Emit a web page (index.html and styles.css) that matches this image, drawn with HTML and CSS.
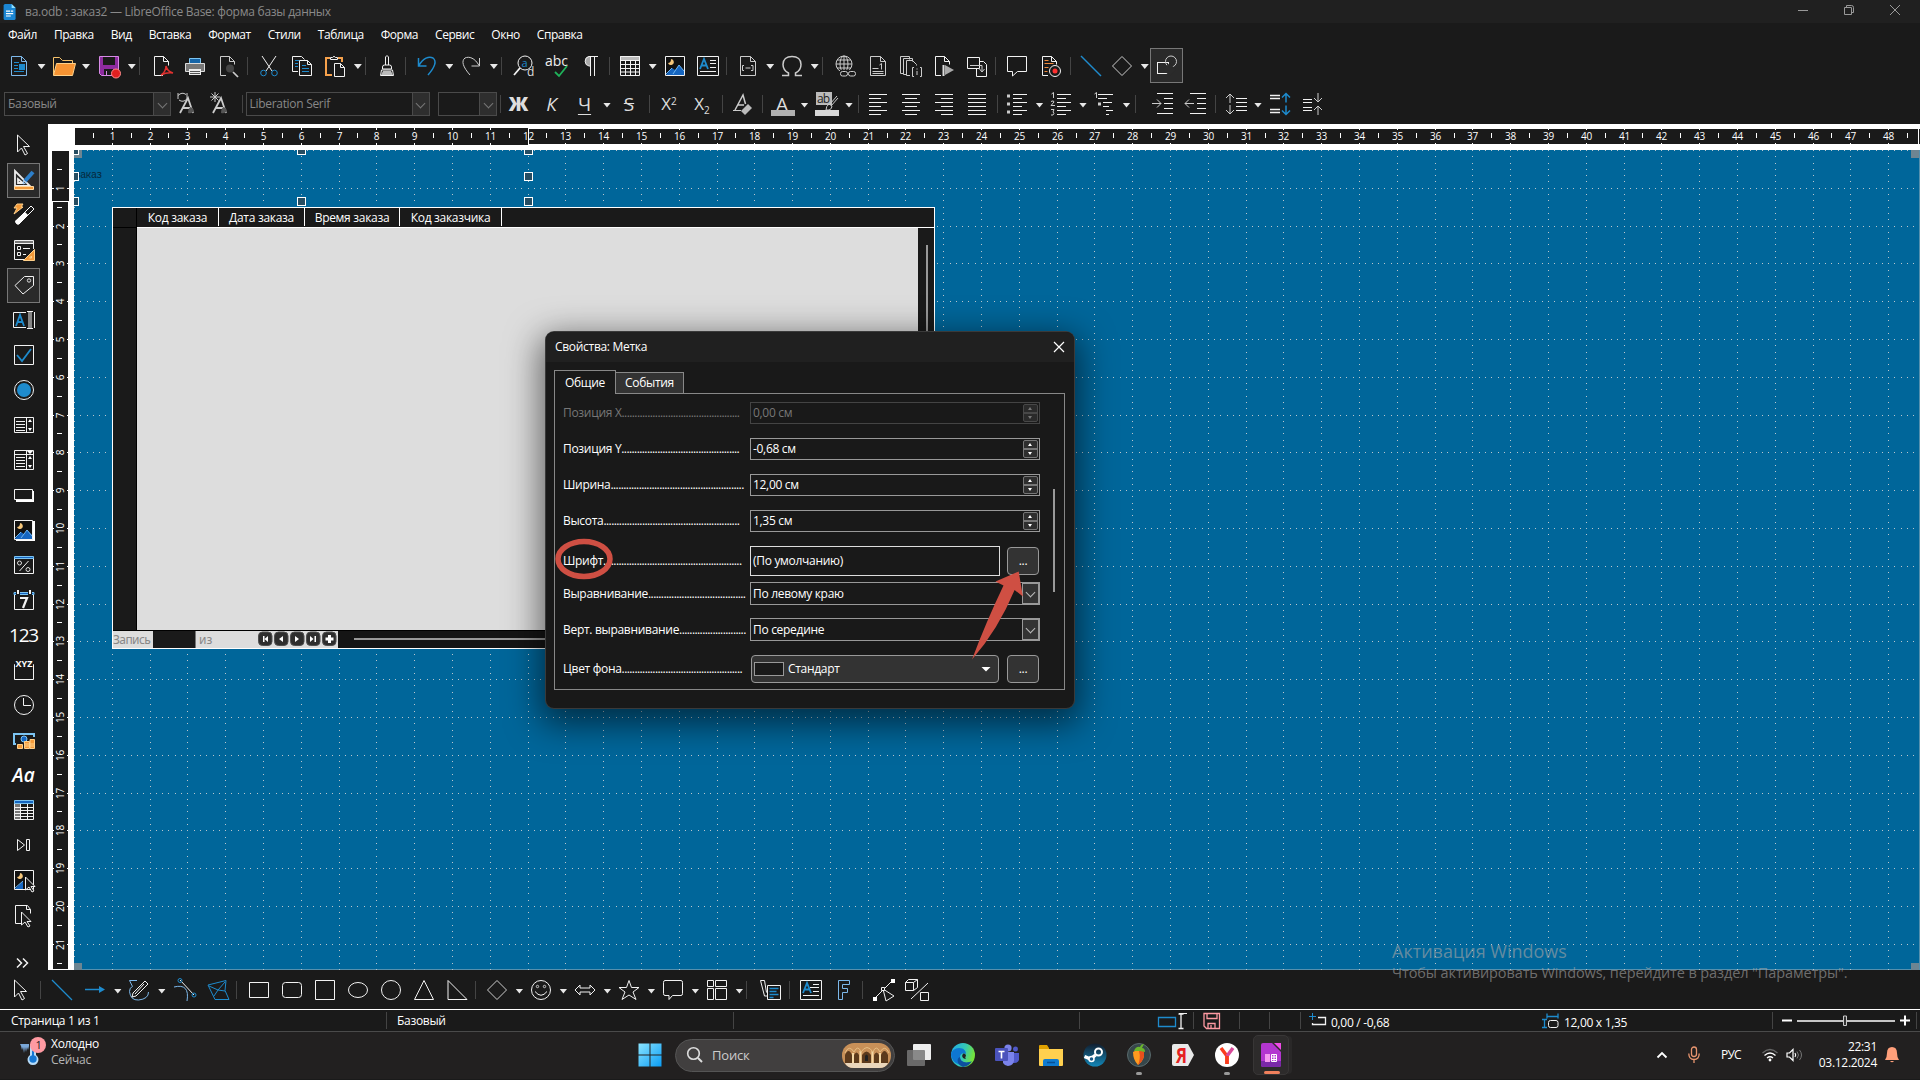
FILE: index.html
```html
<!DOCTYPE html>
<html lang="ru">
<head>
<meta charset="utf-8">
<title>ва.odb : заказ2 — LibreOffice Base: форма базы данных</title>
<link rel="stylesheet" href="styles.css">
</head>
<body>
<header class="titlebar">
  <svg class="appicon" viewBox="0 0 16 20"><path fill="#1b86d3" d="M2 0h8l5 5v13a2 2 0 0 1-2 2H2a2 2 0 0 1-2-2V2a2 2 0 0 1 2-2z"/><path fill="#8fe0ff" d="M10 0l5 5h-5z"/><path stroke="#fff" stroke-width="1.5" d="M3 9h5M3 12h9M3 15h6M9 9h3"/></svg>
  <span class="wtitle">ва.odb : заказ2 — LibreOffice Base: форма базы данных</span>
  <div class="wbtns">
    <svg viewBox="0 0 12 12"><path d="M1 6.5h10"/></svg>
    <svg viewBox="0 0 12 12"><path d="M1.5 3.5h7v7h-7zM3.5 3v-1.5h5q2 0 2 2v5h-1.500"/></svg>
    <svg viewBox="0 0 12 12"><path d="M1 1l10 10M11 1L1 11"/></svg>
  </div>
</header>
<nav class="menu"><span>Файл</span><span>Правка</span><span>Вид</span><span>Вставка</span><span>Формат</span><span>Стили</span><span>Таблица</span><span>Форма</span><span>Сервис</span><span>Окно</span><span>Справка</span></nav>

<div class="tb tb1">
  <i><svg viewBox="0 0 24 24"><path class="lb" d="M4.500 2.500h10l5 5v14h-15zM14.500 2.500v5h5"/><path class="b" d="M7 8.500h5M7 11.500h4M7 14.500h4M7 17.500h10"/><path fill="#1e8bcd" d="M12 10h6v6h-6z"/></svg></i><u></u>
  <i><svg viewBox="0 0 24 24"><path stroke="#f6c26b" d="M1.500 21v-17.500h6l3 3h10v4"/><path fill="#f79433" stroke="#ffd28a" d="M1.500 21.500l3-12h19l-3 12z"/></svg></i><u></u>
  <i class="m1"><svg viewBox="0 0 24 24"><path fill="#8e2ba0" stroke="#d78be6" d="M2.500 2.500h19v19h-17l-2-2z"/><path fill="#1a1a1a" d="M6 3h12v8H6zM7 15h9v6H7z"/><path stroke="#d78be6" d="M9.500 17v4"/><circle cx="19" cy="19.500" r="4.500" fill="#e02020" stroke="#ff8a8a"/></svg></i><u></u><b></b>
  <i class="m1"><svg viewBox="0 0 24 24"><path class="w" d="M13 21.500H4.500v-19h9l5 5v4M13.500 2.500v5h5"/><path stroke="#e0312f" stroke-width="1.500" d="M11 21c3-2 5-6 5-9 1 4 3 6 7 7-4-.5-8 0-12 2z"/></svg></i>
  <i><svg viewBox="0 0 24 24"><path stroke="#7cc4f2" fill="#1565a8" d="M6.500 9V4.500h11V9"/><path fill="#777" stroke="#ddd" d="M2.500 9.500h19v8h-19z"/><path fill="#eee" d="M6 15h12v6H6z"/><path d="M7 17.500h10M7 19.500h10" stroke="#555"/></svg></i>
  <i><svg viewBox="0 0 24 24"><path d="M10 21.500H4.500v-19h9l5 5v3M13.500 2.500v5h5"/><circle cx="14" cy="14.500" r="4" fill="#444"/><path stroke-width="1.700" d="M17 18l5 5"/></svg></i><b></b>
  <i class="m1"><svg viewBox="0 0 24 24"><path class="w" d="M5 2l10 15M19 2L9 17"/><circle class="b" cx="6.500" cy="19" r="2.800"/><circle class="b" cx="17.500" cy="19" r="2.800"/></svg></i>
  <i><svg viewBox="0 0 24 24"><path class="w" d="M8 17.500H2.500v-15h9l3 3"/><path class="w" fill="#1a1a1a" d="M9.500 6.500h8l4 4v11h-12zM17.500 6.500v4h4"/><path class="b" d="M5 6.500h4M5 9.500h3M5 12.500h3M12 11.500h4M12 14.500h7M12 17.500h7"/></svg></i>
  <i><svg viewBox="0 0 24 24"><path stroke="#f6a14b" stroke-width="2" d="M9 21H3V4h4M15 4h4v4"/><path class="w" d="M7.500 5.500v-2h2q1.500-2.500 3 0h2v2z"/><path class="w" fill="#1a1a1a" d="M11.500 9.500h6l4 4v9h-10zM17.500 9.500v4h4"/></svg></i><u></u><b></b>
  <i><svg viewBox="0 0 24 24"><path d="M10.500 11V3q1.500-3 3 0v8M7.500 15v-2q0-2 2-2h5q2 0 2 2v2zM6.500 16h11l1 5.500h-13z" class="w"/><path fill="#bbb" d="M8 17h8l2 4H6z"/></svg></i><b></b>
  <i><svg viewBox="0 0 24 24"><path class="b" stroke-width="1.500" d="M3.500 4v8h8M4 11.500C8 4 14 2 18 4c4 3 2 9-5 17"/></svg></i><u></u>
  <i><svg viewBox="0 0 24 24"><path d="M20.500 4v8h-8M20 11.500C16 4 10 2 6 4c-4 3-2 9 5 17"/></svg></i><u></u><b></b>
  <i class="m1"><svg viewBox="0 0 24 24"><circle class="w" cx="13" cy="9" r="7"/><path class="w" stroke-width="1.800" d="M8 14l-6 7"/><text x="9.500" y="13" font-size="11" fill="#1e8bcd">a</text><text x="15" y="22" font-size="12" fill="#ddd">d</text></svg></i>
  <i><svg viewBox="0 0 24 24"><text x="0" y="12" font-size="14" textLength="23" fill="#eee">abc</text><path stroke="#1fb25a" stroke-width="1.800" d="M10 18l4 4 8-10"/></svg></i>
  <i><svg viewBox="0 0 24 24"><path fill="#aaa" d="M12 2v10a5 5 0 0 1 0-10z"/><path class="w" d="M20 2.500h-9a4.500 4.800 0 0 0 0 9.500h1.500v10M12.500 3v19M16.500 3v19"/></svg></i><b></b>
  <i><svg viewBox="0 0 24 24"><path fill="#bbb" d="M2 2h20v4H2z"/><path class="w" d="M2.500 2.500h19v19h-19zM2.500 6.500h19M2.500 10.500h19M2.500 14.500h19M2.500 18h19M7.500 6v15.500M12.500 6v15.500M17.500 6v15.500"/></svg></i><u></u>
  <i><svg viewBox="0 0 24 24"><path class="w" fill="#111" d="M2.500 2.500h19v19h-19z"/><path fill="#1565c0" d="M3 21l6-7 3 2 4-5 5 6v4z"/><path stroke="#6db5f0" d="M3 20l6-6M10 20l6-9 5 6"/><path fill="#f5c67a" d="M8 5a3 3 0 1 1-3 4q3 0 3-4z"/></svg></i>
  <i><svg viewBox="0 0 24 24"><path class="w" d="M1.500 2.500h21v19h-21zM14 6.500h6M14 9.500h6M14 13.500h6M4 17.500h16"/><path class="b" stroke-width="1.800" d="M4 15l4-10 4 10M5.500 11.500h5"/></svg></i><b></b>
  <i><svg viewBox="0 0 24 24"><path d="M4.500 2.500h10l5 5v14h-15zM14.500 2.500v5h5M8 11.500H6.500v5H8M15 11.500h2v5h-2M9.500 14h5"/></svg></i><u></u>
  <i><svg viewBox="0 0 24 24"><path d="M2 21.500h6.500v-2.500C4.500 17 3 14 3 10.500 3 5.500 6.500 2.500 12 2.500s9 3 9 8c0 3.500-1.500 6.500-5.500 8.500v2.500H22" stroke-width="1.500"/></svg></i><u></u><b></b>
  <i class="m1"><svg viewBox="0 0 24 24"><circle cx="11" cy="10" r="8"/><ellipse cx="11" cy="10" rx="4" ry="8"/><path d="M3 10h16M4 6h14M4 14h14M11 2v14"/><rect x="7" y="16" width="16" height="7" fill="#1a1a1a" stroke="none"/><rect x="7.500" y="17.500" width="7" height="4.500" rx="2"/><rect x="15.500" y="17.500" width="7" height="4.500" rx="2"/></svg></i>
  <i><svg viewBox="0 0 24 24"><path d="M4.500 2.500h10l5 5v14h-15zM14.500 2.500v5h5M6.500 14.500h6M6.500 17.500h11M6.500 19.500h11M13.500 11l2-1.500v6"/></svg></i>
  <i><svg viewBox="0 0 24 24"><path d="M5 19.500H1.500v-17h9v3M8 20.500H4.500v-16h9v3M11 21.500H7.500v-15h6l4 4v1M15 13.500h-1.500v9H15M21 13.500h1.500v9H21M18 17v4M18 14.500v1"/></svg></i>
  <i><svg viewBox="0 0 24 24"><path class="w" d="M9 21.500H3.500v-19h9l5 5v3M12.500 2.500v5h5"/><path fill="#aaa" d="M13 11l9 5-9 5z"/><path stroke-width="2" stroke="#ddd" d="M11.500 11v11"/></svg></i>
  <i><svg viewBox="0 0 24 24"><path class="w" d="M2.500 3.500h12v11h-12zM14.500 7.500h4l3 3v12h-10v-8"/><path d="M5 11.500h12v6M14.500 15l2.500 3 2.500-3"/></svg></i><b></b>
  <i><svg viewBox="0 0 24 24"><path class="w" d="M2.500 2.500h19v15h-9l-5 4.500v-4.500h-5z"/></svg></i>
  <i class="m1"><svg viewBox="0 0 24 24"><path class="w" d="M9 21.500H3.500v-19h9l5 5v3M12.500 2.500v5h5"/><path stroke="#f08a3c" d="M5.500 6.500h4M5.500 9.500h9M5.500 13.500h4M5.500 17.500h3"/><circle class="w" cx="16" cy="17" r="5.500" fill="#1a1a1a"/><circle cx="16" cy="17" r="2.500" fill="#ff3030" stroke="none"/></svg></i><b></b>
  <i><svg viewBox="0 0 24 24"><path class="b" stroke-width="1.500" d="M2 2l20 20"/></svg></i>
  <i class="n2"><svg viewBox="0 0 24 24"><path d="M12 2.500l9.500 9.500-9.500 9.500L2.500 12z"/></svg></i><u></u>
  <i class="on"><svg viewBox="0 0 24 24"><rect class="w" x="2.500" y="8.500" width="11" height="11"/><circle cx="16" cy="7.500" r="5.500"/><path fill="#2b2b2b" d="M14.500 9l6.500 6.500-6.500 6.500L8 15.500z"/></svg></i>
</div>

<div class="tb tb2">
  <span class="cb cb1 lc"><em>Базовый</em><s></s></span>
  <i class="x1"><svg viewBox="0 0 24 24"><path d="M3 21l8-15 5 15M6 16h7" stroke-width="1.800"/><path d="M1 7V1M1 3.500q4-4 8-1M10 1v6q-4 4-8 1"/><path fill="#555" d="M21 6l-7 9M23 8l-7 9M14 15q-3 1-3 6 5 1 6-3z"/></svg></i>
  <i><svg viewBox="0 0 24 24"><path d="M3 21l8-15 5 15M6 16h7" stroke-width="1.800"/><path d="M5 0v10M0 5h10M1.500 1.500l7 7M8.500 1.500l-7 7"/><path fill="#555" d="M21 6l-7 9M23 8l-7 9M14 15q-3 1-3 6 5 1 6-3z"/></svg></i><b></b>
  <span class="cb cb2"><em>Liberation Serif</em><s></s></span>
  <span class="cb cb3"><em></em><s></s></span><b></b>
  <i class="x2 tx bold">Ж</i><i class="tx ital">К</i><i class="tx und">Ч</i><u></u><i class="tx strike">S</i><b></b>
  <i class="tx sm">X<sup>2</sup></i><i class="tx sm">X<sub>2</sub></i><b></b>
  <i><svg viewBox="0 0 24 24"><path d="M5 18l8-15 2.500 9M8 13h6" stroke-width="1.500"/><path d="M3 18.500h8"/><path fill="#bbb" d="M18 12l4 4-7 7-4-4z"/></svg></i><b></b>
  <i class="tx">A<q></q></i><u></u>
  <i><svg viewBox="0 0 24 24"><path fill="#bbb" d="M1 0h16v13H1z"/><text x="2" y="11" font-size="12" textLength="13" fill="#222">ab</text><path d="M22 4l-7 8M23 6l-7 8M14 12q-3 2-3 6h3q3-1 3-4z"/><path fill="#d8d8d8" d="M0 18h24v6H0z"/></svg></i><u></u><b></b>
  <i><svg viewBox="0 0 24 24"><path class="w" d="M3 2.500h18M3 6.500h12M3 10.500h18M3 14.500h12M3 18.500h18M3 22.500h12"/></svg></i>
  <i><svg viewBox="0 0 24 24"><path class="w" d="M3 2.500h18M6 6.500h12M3 10.500h18M6 14.500h12M3 18.500h18M6 22.500h12"/></svg></i>
  <i><svg viewBox="0 0 24 24"><path class="w" d="M3 2.500h18M9 6.500h12M3 10.500h18M9 14.500h12M3 18.500h18M9 22.500h12"/></svg></i>
  <i><svg viewBox="0 0 24 24"><path class="w" d="M3 2.500h18M3 6.500h18M3 10.500h18M3 14.500h18M3 18.500h18M3 22.500h18"/></svg></i><b></b>
  <i><svg viewBox="0 0 24 24"><path class="w" d="M8 2.500h14M8 6.500h9M8 10.500h14M8 14.500h9M8 18.500h14M8 22.500h9"/><path stroke-width="3" d="M2 4h3M2 12h3M2 20h3"/></svg></i><u></u>
  <i class="n1"><svg viewBox="0 0 24 24"><path class="w" d="M8 2.500h14M8 6.500h9M8 10.500h14M8 14.500h9M8 18.500h14M8 22.500h9"/><path d="M2.500 2l2-1.500V6M2 9.500q3-1.500 3 .5l-3 3.500h4M2 17.500h3l-1 2.500q2 1 0 3H2"/></svg></i><u></u>
  <i class="n1"><svg viewBox="0 0 24 24"><path class="w" d="M6 2.500h15M6 6.500h9M11 10.500h9M11 14.500h6M14 18.500h7M14 22.500h3"/><path d="M2.500 2l2-1.500V6"/><path stroke-width="3" d="M6 12h3"/></svg></i><u></u><b></b>
  <i class="x3"><svg viewBox="0 0 24 24"><path class="w" d="M6 1.500h16M13 6.500h9M13 11.500h9M13 16.500h9M6 21.500h16"/><path d="M1 11.500h9M6 7.500l4 4-4 4"/></svg></i>
  <i><svg viewBox="0 0 24 24"><path class="w" d="M6 1.500h16M13 6.500h9M13 11.500h9M13 16.500h9M6 21.500h16"/><path d="M1 11.500h9M5 7.500l-4 4 4 4"/></svg></i><b></b>
  <i><svg viewBox="0 0 24 24"><path class="w" d="M12 6.500h11M12 10.500h11M12 14.500h11M12 18.500h11"/><path d="M6 2v9M2 6l4-4 4 4M6 13v9M2 18l4 4 4-4"/></svg></i><u></u>
  <i class="x4"><svg viewBox="0 0 24 24"><path class="w" stroke-width="1.500" d="M2 3.500h10M2 6.500h10M2 17.500h10M2 20.500h10"/><path class="b" d="M18 1.500v9M14 5.500l4-4 4 4M18 13.500v9M14 18.500l4 4 4-4" stroke-width="1.500"/></svg></i>
  <i><svg viewBox="0 0 24 24"><path class="w" d="M2 7.500h9M2 10.500h9M2 15.500h9M2 18.500h9"/><path d="M17 1v9M13 6l4 4 4-4M17 23v-9M13 18l4-4 4 4"/></svg></i>
</div>

<main class="work">
  <aside class="side">
    <i><svg viewBox="0 0 24 24"><path class="w" d="M5.500 2l12 11.500h-6l4 7-2.500 1.500-3.500-7-4 4z"/></svg></i>
    <i class="on"><svg viewBox="0 0 24 24"><path stroke="#eee" stroke-width="1.800" d="M3 3v15h15zM6 11v4h5z"/><path stroke="#2d7fc9" stroke-width="4" d="M21 4l-8 9"/><path stroke="#9cc9f5" d="M12 12l-1 4 4-2"/><path fill="#f39a3a" stroke="#ffd9a0" d="M2.500 18.500h19v3h-19z"/></svg></i>
    <i><svg viewBox="0 0 24 24"><path stroke="#fff" d="M19 3l3 3L7 21q-3 1-3-3z"/><path fill="#fff" d="M13 9l3 3-9 9q-3 1-4-3z"/><path fill="#f39a3a" stroke="#ffd08a" d="M5 1h6L9 4h2L2 11l3-6H2z"/></svg></i>
    <i><svg viewBox="0 0 24 24"><path class="w" d="M12 21.500H2.500v-19h19V11M2.500 5.500h19M5.500 8.500h3v3h-3zM5.500 14.500h3v3h-3zM11 10.500h7M11 16.500h3"/><path fill="#777" d="M3 3h18v2H3z"/><path fill="#f39a3a" stroke="#ffd08a" d="M22.500 11.500v11h-11zM19.500 18v2h-2z"/></svg></i>
    <i class="on"><svg viewBox="0 0 24 24"><path class="w" d="M12.500 3.500h9v9l-10.500 8.500-8-8.500z"/><circle cx="17" cy="7.500" r="1.700"/></svg></i>
    <i><svg viewBox="0 0 24 24"><path class="w" d="M14 4.500H1.500v15H14M22.500 4v16M15 3.500h6M15 20.500h6M17 3.500v17h2v-17"/><path class="b" stroke-width="1.800" d="M4 18l4-11 4 11M5.500 14h5"/></svg></i>
    <i><svg viewBox="0 0 24 24"><path class="w" d="M2.500 2.500h19v19h-19z"/><path class="b" stroke-width="1.800" d="M5 12l5 6 9-12"/></svg></i>
    <i><svg viewBox="0 0 24 24"><circle class="w" cx="12" cy="12" r="9.500"/><circle cx="12" cy="12" r="7" fill="#1e8bcd" stroke="none"/></svg></i>
    <i><svg viewBox="0 0 24 24"><path class="w" d="M2.500 4.500h19v15h-19zM14.500 4.500v15M4 8.500h9M4 11.500h9M4 14.500h9M4 17.500h9"/><path fill="#fff" d="M18 6l2 3h-4zM18 18l2-3h-4z"/></svg></i>
    <i><svg viewBox="0 0 24 24"><path class="w" d="M2.500 2.500h19v19h-19zM14.500 2.500v19M2.500 6.500h19M4 9.500h9M4 12.500h9M4 15.500h9M4 18.500h9"/><path fill="#fff" d="M18 8l2 3h-4zM18 20l2-3h-4zM15 3h6l-3 3z"/></svg></i>
    <i><svg viewBox="0 0 24 24"><path fill="#fff" d="M4 8h18v11H4z"/><path fill="#1a1a1a" class="w" d="M2.500 6.500h18v10h-18z"/></svg></i>
    <i><svg viewBox="0 0 24 24"><path fill="#fff" d="M4 3h19v20H4z"/><path class="w" fill="#111" d="M2.500 2.500h18v19h-18z"/><path fill="#1565c0" d="M3 21l6-7 3 2 3-4 5 5v4z"/><path stroke="#6db5f0" d="M3 20l6-6M9 20l6-8 5 6"/><path fill="#f5c67a" d="M8 5a3 3 0 1 1-3 4q3 0 3-4z"/></svg></i>
    <i><svg viewBox="0 0 24 24"><path class="w" d="M2.500 4v16.500h19V4M16.500 8l-9 10"/><circle cx="7.500" cy="10" r="2"/><circle cx="16" cy="16.500" r="2"/><path fill="#1565c0" stroke="#7cc4f2" d="M2.500 3.500h19v2h-19z"/></svg></i>
    <i><svg viewBox="0 0 24 24"><path class="w" d="M2.500 6v15.500h19V6"/><path fill="#1565c0" stroke="#7cc4f2" d="M2 4.500h20v2H2z"/><path stroke="#1a1a1a" stroke-width="4" d="M6 2v5M18 2v5"/><path class="w" stroke-width="2" d="M6 2v4M18 2v4"/><path class="w" stroke-width="2.200" d="M8 10h7l-4 10"/></svg></i>
    <i class="num">123</i>
    <i><svg viewBox="0 0 24 24"><path class="w" d="M3 6.500h-.500v15h19v-15h-.500"/><text x="3.500" y="9" font-size="9" font-weight="700" textLength="17" fill="#fff">XYZ</text></svg></i>
    <i><svg viewBox="0 0 24 24"><circle class="w" cx="12" cy="12" r="9.500"/><path class="w" d="M11.500 5v7.500H19"/></svg></i>
    <i><svg viewBox="0 0 24 24"><path stroke="#7cc4f2" stroke-width="2" d="M4 16H2V6h20v3"/><circle cx="12" cy="11" r="3" fill="#1565c0" stroke="#7cc4f2"/><path fill="#f39a3a" stroke="#ffd08a" d="M5.500 16.500h5v4h-5zM12.500 13.500h5v7h-5zM18 11.500h4.500v9H18zM12.500 16h10M12.500 18h10"/></svg></i>
    <i class="num aa">Aa</i>
    <i><svg viewBox="0 0 24 24"><path fill="#777" d="M3 6h5v15H3z"/><path class="w" d="M2.500 3v18.500h19V3M2.500 9.500h19M2.500 12.500h19M2.500 15.500h19M2.500 18.500h19M8.500 6v15M15.500 6v15"/><path fill="#1565c0" stroke="#7cc4f2" d="M2.500 2.500h19v3h-19z"/></svg></i>
    <i><svg viewBox="0 0 24 24"><path class="w" d="M5.500 6.500v11l7-5.500zM14.500 6.500h3v11h-3z"/></svg></i>
    <i><svg viewBox="0 0 24 24"><path class="w" fill="#111" d="M2.500 2.500h19v19h-19z"/><path fill="#1565c0" d="M3 21l8-8v8z"/><path stroke="#6db5f0" d="M3 20l8-7"/><path fill="#f5c67a" d="M8 5a3 3 0 1 1-3 4q3 0 3-4z"/><path class="w" fill="#1a1a1a" d="M13.500 9l9.500 9.500h-4l3 4.500-2 1-3-5-3.500 3z"/></svg></i>
    <i><svg viewBox="0 0 24 24"><path class="w" d="M9 20.500H3.500v-18h12l3 4v4M14.500 2.500v4h4"/><path class="w" fill="#1a1a1a" d="M9.500 9l9.500 9.500h-4l3 4.500-2 1-3-5-3.500 3z"/></svg></i>
    <i class="more"><svg viewBox="0 0 24 24"><path class="w" stroke-width="1.500" d="M5 7.500l4.500 4.500L5 16.500M11 7.500l4.500 4.500-4.500 4.500"/></svg></i>
  </aside>

  <section class="doc">
    <svg id="hr" class="hruler" width="1872" height="26"></svg>
    <svg id="vr" class="vruler" width="26" height="820"></svg>
    <div class="canvas">
      <svg id="grid" class="grid" width="1846" height="820"></svg>
      <span class="lbl">заказ</span>
      <div class="table">
        <div class="thead"><span class="rowh"></span><span class="c1">Код заказа</span><span class="c2">Дата заказа</span><span class="c3">Время заказа</span><span class="c4">Код заказчика</span></div>
        <div class="tbody"><div class="rows"></div><div class="cells"></div><div class="vs"><p></p></div></div>
        <div class="nav"><span class="rec">Запись</span><span class="box"></span><span class="of">из</span>
          <svg viewBox="0 0 80 16"><g fill="#2e2e2e" stroke="#505050"><rect x=".5" y="1" width="13.500" height="13.500" rx="4"/><rect x="16.500" y="1" width="13.500" height="13.500" rx="4"/><rect x="32.500" y="1" width="13.500" height="13.500" rx="4"/><rect x="48.500" y="1" width="13.500" height="13.500" rx="4"/><rect x="64.500" y="1" width="13.500" height="13.500" rx="4"/></g><path fill="#fff" d="M5 5h1.500v6H5zM10 5v6L6.500 8zM25 5v6l-4-3zM37 5v6l4-3zM52 5v6l3.500-3zM56.500 5H58v6h-1.500zM70 4h3v2.500h2.500v3H73V12h-3V9.500h-2.500v-3H70z"/></svg>
          <div class="hs"><p></p></div></div>
      </div>
      <svg id="handles" class="grid" width="1846" height="820"></svg>
    </div>
  </section>
</main>

<div class="tb tb3">
  <i><svg viewBox="0 0 24 24"><path class="w" d="M5.500 2l12 11.500h-6l4 7-2.500 1.500-3.500-7-4 4z"/></svg></i><b></b>
  <i class="m1"><svg viewBox="0 0 24 24"><path class="b" stroke-width="1.300" d="M2 2l20 20"/></svg></i>
  <i><svg viewBox="0 0 24 24"><path class="b" stroke-width="1.500" d="M2 11.500h16"/><path fill="#1e8bcd" d="M16 8l6 3.500-6 3.500z"/></svg></i><u></u>
  <i><svg viewBox="0 0 24 24"><path class="lb" d="M10 2.500H2.500l3 6q-3 1-3 5 1 9 9 8.500 10-1 10-8"/><path class="w" d="M18 3l3 3L9 18l-4 1 1-4zM17 6L8 16"/></svg></i><u></u>
  <i class="m1"><svg viewBox="0 0 24 24"><path class="lb" d="M1 9q16-4 13 14" /><path class="w" d="M7 2l14 15"/><circle class="b" cx="7" cy="2.500" r="2"/><circle class="b" cx="21" cy="17" r="2"/></svg></i>
  <i><svg viewBox="0 0 24 24"><path class="b" d="M2 7l18-4.500-1 10 4 9H9zM3 8l9 4 7-8M12 12l-4 6M12 12l7 1"/></svg></i><b></b>
  <i class="m1"><svg viewBox="0 0 24 24"><path class="w" d="M2.500 4.500h19v15h-19z"/></svg></i>
  <i><svg viewBox="0 0 24 24"><rect class="w" x="2.500" y="4.500" width="19" height="15" rx="3"/></svg></i>
  <i><svg viewBox="0 0 24 24"><path class="w" d="M2.500 2.500h19v19h-19z"/></svg></i>
  <i><svg viewBox="0 0 24 24"><ellipse class="w" cx="12" cy="12" rx="9.500" ry="7.500"/></svg></i>
  <i><svg viewBox="0 0 24 24"><circle class="w" cx="12" cy="12" r="9.500"/></svg></i>
  <i><svg viewBox="0 0 24 24"><path class="w" d="M12 2.500l9.500 19h-19z"/></svg></i>
  <i><svg viewBox="0 0 24 24"><path class="w" d="M3 2.500v19h19z"/></svg></i><b></b>
  <i><svg viewBox="0 0 24 24"><path d="M12 2.500l9.500 9.500-9.500 9.500L2.500 12z"/></svg></i><u></u>
  <i><svg viewBox="0 0 24 24"><circle class="w" cx="12" cy="12" r="9.500"/><circle cx="8.500" cy="8.500" r="1.200"/><circle cx="15.500" cy="8.500" r="1.200"/><path class="w" d="M6 13.500q6 7.500 12 0"/></svg></i><u></u>
  <i><svg viewBox="0 0 24 24"><path class="w" d="M2 12l5-5v3h10V7l5 5-5 5v-3H7v3z"/></svg></i><u></u>
  <i><svg viewBox="0 0 24 24"><path class="w" d="M12 2.500l2.500 7h7.500l-6 4.500 3 7.500-7-4.500-7 4.500 3-7.500-6-4.500h7.500z"/></svg></i><u></u>
  <i><svg viewBox="0 0 24 24"><path class="w" d="M4 2.500h16q1.500 0 1.500 2v11q0 2-1.500 2h-8.500L8 21.500v-4H4q-1.500 0-1.500-2v-11q0-2 1.500-2z"/></svg></i><u></u>
  <i><svg viewBox="0 0 24 24"><path class="w" d="M2.500 2.500h6v6h-6zM10.500 2.500h11v6h-11zM2.500 10.500h6v11h-6zM10.500 10.500h11v11h-11z"/></svg></i><u></u><b></b>
  <i class="x5"><svg viewBox="0 0 24 24"><path class="w" d="M1.500 2.500h4l2 12M1.500 2.500l4 15.500h3M8.500 7.500h13v14h-13z"/><path class="b" stroke-width="1.500" d="M10.500 10.500h9M10.500 13.500h7M10.500 16.500h9M10.500 19.500h4"/></svg></i><b></b>
  <i><svg viewBox="0 0 24 24"><path class="w" d="M1.500 2.500h21v19h-21zM14 6.500h6M11 9.500h9M14 13.500h6M4 17.500h16"/><path class="b" stroke-width="1.800" d="M4 15l4-10 4 10M5.500 11.500h5"/></svg></i>
  <i><svg viewBox="0 0 24 24"><path class="lb" d="M6.500 2.500h11v4h-7v4h5v4h-5v7h-4z"/></svg></i><b></b>
  <i><svg viewBox="0 0 24 24"><path class="w" d="M2 21L21 2M11 11l3 12 8-5z"/><path fill="#fff" d="M1 19h4v4H1zM19 1h4v4h-4z"/><path class="w" fill="#1a1a1a" d="M9.500 9.500h3v3h-3z"/></svg></i>
  <i><svg viewBox="0 0 24 24"><path class="w" d="M.5 4.500h8v8h-8zM.5 4.500l3-3h9l-4 3M12.500 1.500v8l-4 3M15.500 14.500h8v8h-8zM23 5L6 21"/></svg></i>
</div>

<footer class="status">
  <span class="s1">Страница 1 из 1</span><span class="s2">Базовый</span><span class="s3"></span>
  <span class="s4"><svg width="26" height="20" viewBox="0 0 26 20"><path class="b" stroke-width="1.300" d="M.5 6.500h17v9H.5z"/><path class="w" d="M21 2.500h8M25.500"/><path class="w" stroke-width="1.300" d="M20.500 3h5M20.500 17.500h5M23 3v14.500"/></svg></span>
  <span class="s5"><svg width="18" height="20" viewBox="0 0 18 20"><path stroke="#ff9aa2" stroke-width="1.300" d="M1 2.500h15.500v15h-13L1 15zM4 2.500v5h10v-5M5 17.500v-5h7v5M8 14v3"/></svg></span>
  <span class="s6"></span>
  <span class="s7"><svg width="18" height="16" viewBox="0 0 18 16"><path class="b" d="M3.500 0v7M0 3.500h7"/><path class="w" stroke-width="1.300" d="M3.500 10v1.500h13v-7H9"/></svg><em>0,00 / -0,68</em></span>
  <span class="s8"><svg width="18" height="16" viewBox="0 0 18 16"><path class="b" stroke-width="1.300" d="M5 3.500h11M5 .500v5M16 .500v5M2.500 6.500v8M0 6.500h5M0 14.500h5"/><rect class="w" x="6.500" y="7.500" width="9.500" height="7" rx="2"/></svg><em>12,00 x 1,35</em></span>
  <span class="s9"><svg width="130" height="16" viewBox="0 0 130 16"><path stroke="#fff" stroke-width="2" d="M0 7.500h10M118 7.500h10M123 2.500v10"/><path stroke="#fff" stroke-width="1.500" d="M15 8h98"/><path fill="#333" stroke="#ccc" d="M61.500 3h3v9.500h-3z"/></svg></span>
  <span class="s10">100 %</span>
</footer>

<div class="taskbar">
  <div class="weather">
    <svg width="36" height="32" viewBox="0 0 36 32"><path fill="#7aa7d8" d="M3 8h9v2l-1 4-1-3-1 5-1-5-1 6-1-6-1 3-1-4z"/><path fill="#b8dcf8" d="M13 8h6v11a5.500 5.500 0 1 1-6 0z"/><circle cx="16" cy="23" r="3.700" fill="#1577d3"/><path stroke="#1577d3" stroke-width="2" d="M16 12v9"/><circle cx="21" cy="9" r="8" fill="#ff9aa2"/><text x="18.500" y="13" font-size="11" fill="#222">1</text></svg>
    <div><span>Холодно</span><em>Сейчас</em></div>
  </div>
  <div class="apps">
    <svg width="24" height="24" viewBox="0 0 24 24"><defs><linearGradient id="wl" x1="0" y1="0" x2="1" y2="1"><stop offset="0" stop-color="#8be4ff"/><stop offset="1" stop-color="#0a9df5"/></linearGradient></defs><path fill="url(#wl)" d="M.5.500h11v11H.5zM12.500.500h11v11h-11zM.5 12.500h11v11H.5zM12.500 12.500h11v11h-11z"/></svg>
    <div class="search"><svg width="18" height="18" viewBox="0 0 18 18"><circle cx="7.500" cy="7.500" r="5.800" stroke="#ddd" stroke-width="1.600"/><path stroke="#ddd" stroke-width="2" d="M12 12l4 4"/></svg><span>Поиск</span>
      <svg class="hall" width="49" height="25" viewBox="0 0 49 25"><rect width="49" height="25" rx="12" fill="#c89058"/><path fill="#5c3a1c" d="M3 20V12q3.500-8 7 0v8zM12 20v-8q2.500-5 5 0v8zM20 20v-8q4.500-7 9 0v8zM32 20v-8q2.500-5 5 0v8zM39 20v-8q3.500-8 7 0v8z"/><path stroke="#f4d7a4" stroke-width="2" d="M11 10v10M18.500 8v12M30.500 8v12M38 10v10"/><path stroke="#e6bd82" d="M3 10q4-9 9-1 4-8 7 0 6-9 12 0 3-8 7 0 5-8 9 1"/><path fill="#ead6bb" d="M3 20h43q-2 5-9 5H12q-7 0-9-5z"/><path fill="#222" d="M23 13q1.500-3 3 0v5h-3z"/></svg></div>
    <svg class="a-task" width="24" height="24" viewBox="0 0 24 24"><rect x="6" y="1" width="18" height="16" rx="1" fill="#eee"/><rect x="0" y="7" width="18" height="16" rx="1" fill="#777" opacity=".85"/></svg>
    <svg width="24" height="24" viewBox="0 0 24 24"><defs><linearGradient id="eg" x1="0" y1="0" x2="1" y2=".3"><stop offset="0" stop-color="#1fa9e8"/><stop offset=".6" stop-color="#35c9b5"/><stop offset="1" stop-color="#74e23c"/></linearGradient></defs><circle cx="12" cy="12" r="12" fill="url(#eg)"/><path fill="#0e77d2" d="M0 12c0-4 4-7 8-7 5 0 7 3 7 6-3-2-6 0-6 3 0 5 6 7 11 5a12 12 0 0 1-20-7z"/><path fill="#0d4f9e" d="M9 14c0 5 6 7 12 4a12 12 0 0 1-9 6c-6-2-7-9-3-10z"/><path fill="#222020" d="M12 11c1-1 3 0 3 2-1 1-1 2 0 3-3 0-5-3-3-5z"/></svg>
    <svg width="24" height="24" viewBox="0 0 24 24"><circle cx="13" cy="5" r="3.600" fill="#7b83eb"/><circle cx="20.500" cy="6" r="2.500" fill="#5059c9"/><path fill="#5059c9" d="M16 10h8v7q-1 3-5 3h-3z"/><path fill="#7b83eb" d="M8 9h11v9a6 6 0 0 1-11 2z"/><rect x="0" y="5" width="13" height="13" rx="1" fill="#4b53bc"/><path stroke="#fff" stroke-width="1.600" d="M3.500 8.500h6M6.500 8.500v7"/></svg>
    <svg width="24" height="24" viewBox="0 0 24 24"><path fill="#e0a100" d="M0 3q0-1 1-1h7l2 3v5H0z"/><path fill="#ffd04f" d="M0 6h24v16q0 1-1 1H1q-1 0-1-1z"/><path fill="#0f7bd0" d="M4 23v-5q0-2 2-2h12q2 0 2 2v5z"/><path stroke="#064f96" stroke-width="1.500" d="M8 19.500h8"/></svg>
    <svg width="24" height="24" viewBox="0 0 24 24"><defs><linearGradient id="st" x1="0" y1="0" x2="0" y2="1"><stop offset="0" stop-color="#111d2e"/><stop offset="1" stop-color="#1387b8"/></linearGradient></defs><circle cx="12" cy="12" r="11.500" fill="url(#st)"/><circle cx="15.500" cy="9" r="3.500" stroke="#fff" stroke-width="2"/><path stroke="#fff" stroke-width="3.500" d="M1.500 13.500l6 2.500 5-4"/><circle cx="8.500" cy="16" r="2.500" stroke="#fff" stroke-width="1.500" fill="#1a5a88"/></svg>
    <svg width="24" height="24" viewBox="0 0 24 24"><circle cx="12" cy="12" r="11.500" fill="#36464a" stroke="#5a6a6c"/><path fill="#ff9a1f" d="M6 9q6-4 11 0 1 8-6 13-5-5-5-13z"/><path fill="#e8501c" d="M12 8q4-1 5 1 1 8-6 13 3-7 1-14z"/><path fill="#6bb52c" d="M7 8q2-5 6-4 1-3 4-3l-2 4q3 0 3 4l-5-1z"/></svg>
    <svg width="24" height="24" viewBox="0 0 24 24"><path fill="#e9e9e9" d="M3 1h14l6 11-6 11H3q-2 0-2-2V3q0-2 2-2z"/><text x="5" y="20" font-size="21" font-weight="700" textLength="11" lengthAdjust="spacingAndGlyphs" fill="#e52020">Я</text></svg>
    <svg width="24" height="24" viewBox="0 0 24 24"><circle cx="12" cy="12" r="12" fill="#fff"/><path stroke="#fa3c1e" stroke-width="3.500" d="M6 5l6 8v8"/><path stroke="#d84a9a" stroke-width="3.500" d="M18 5l-6 8"/><path stroke="#fa3c1e" stroke-width="3.500" d="M12 13v8"/></svg>
    <div class="cur"><svg width="24" height="24" viewBox="0 0 24 24"><path fill="#b336d0" d="M4 0h9l9 9v13q0 2-2 2H4q-2 0-2-2V2q0-2 2-2z"/><path fill="#f04be8" d="M15 0h7v7z"/><path fill="#7a28a8" d="M2 18h20v4q0 2-2 2H4q-2 0-2-2z"/><path fill="#f59af0" d="M6 11h5v8H6z"/><path stroke="#fff" d="M12.500 11.500h5v7h-5zM15 11v8M12 14h6M12 16.500h6"/></svg></div>
  </div>
  <div class="tray">
    <svg width="14" height="10" viewBox="0 0 14 10"><path stroke="#fff" stroke-width="1.800" d="M2.500 7.500L7 3l4.500 4.500"/></svg>
    <svg class="t-mic" width="12" height="18" viewBox="0 0 12 18"><g stroke="#e8956f" stroke-width="1.300"><rect x="3.500" y="1" width="5" height="9.500" rx="2.500"/><path d="M.8 7.500q0 6 5.200 6t5.200-6M6 13.500V17"/></g></svg>
    <span class="lang">РУС</span>
    <svg class="t-wifi" width="16" height="14" viewBox="0 0 16 14"><path stroke="#666" stroke-width="1.300" d="M.5 5q7.500-7 15 0"/><path stroke="#fff" stroke-width="1.300" d="M2.500 7.500q5.500-5 11 0M5 10q3-2.500 6 0"/><circle cx="8" cy="12" r="1.400" fill="#fff"/></svg>
    <svg class="t-vol" width="17" height="14" viewBox="0 0 17 14"><path stroke="#fff" stroke-width="1.200" d="M1 5h2.500L7 1.500v11L3.500 9H1zM9 5q1.500 2 0 4"/><path stroke="#777" d="M11 3.500q3 3.500 0 7M13.500 2q4 5 0 10"/></svg>
    <div class="clock"><span>22:31</span><span>03.12.2024</span></div>
    <svg class="t-bell" width="14" height="16" viewBox="0 0 14 16"><path fill="#ff9f7a" d="M7 0q5 0 5 6l.500 4 1.500 3H0l1.500-3L2 6q0-6 5-6zM5 14h4q-2 2.500-4 0z"/></svg>
  </div>
</div>

<div class="watermark"><p>Активация Windows</p><span>Чтобы активировать Windows, перейдите в раздел "Параметры".</span></div>

<div class="dialog">
  <div class="dtitle"><span>Свойства: Метка</span><svg width="12" height="12" viewBox="0 0 12 12"><path stroke="#fff" stroke-width="1.200" d="M1 1l10 10M11 1L1 11"/></svg></div>
  <div class="tabs"><span class="tab act">Общие</span><span class="tab">События</span></div>
  <div class="panel">
    <div class="row dis"><label>Позиция X<i>..............................................</i></label><div class="fld">0,00 см<span class="spin"></span></div></div>
    <div class="row"><label>Позиция Y<i>..............................................</i></label><div class="fld">-0,68 см<span class="spin"></span></div></div>
    <div class="row"><label>Ширина<i>....................................................</i></label><div class="fld">12,00 см<span class="spin"></span></div></div>
    <div class="row"><label>Высота<i>.....................................................</i></label><div class="fld">1,35 см<span class="spin"></span></div></div>
    <div class="row font"><label>Шрифт<i>......................................................</i></label><div class="fld">(По умолчанию)</div><span class="btn">...</span></div>
    <div class="row sel r6"><label>Выравнивание<i>......................................</i></label><div class="fld">По левому краю<s></s></div></div>
    <div class="row sel r7"><label>Верт. выравнивание<i>..........................</i></label><div class="fld">По середине<s></s></div></div>
    <div class="row col"><label>Цвет фона<i>...............................................</i></label><div class="fld cbtn"><span class="sw"></span>Стандарт<u></u></div><span class="btn">...</span></div>
    <div class="dscroll"></div>
  </div>
</div>
<svg class="marks" width="500" height="140" viewBox="550 530 500 140"><ellipse cx="584" cy="559" rx="26" ry="17.500" stroke="#cf4f43" stroke-width="5.500"/><path fill="#cf4f43" d="M1018.700 571.500l4.200 25-8.300-6.500Q998 630 972 659.500 986 622 1003.500 585.500l-8-4z"/></svg>
<script src="script.js"></script>
</body>
</html>
```
FILE: styles.css
```css
* { box-sizing: border-box; }
body { margin: 0; width: 1920px; height: 1080px; overflow: hidden; background: #1a1a1a; color: #fff; font: 12px/16px "Open Sans", "Noto Sans", sans-serif; letter-spacing: -0.3px; display: flex; flex-direction: column; position: relative; }
svg { display: block; fill: none; overflow: visible; }
svg path:not([stroke]):not([class])[fill], svg [fill]:not([stroke]):not([class]) { stroke: none; }
em, i { font-style: normal; }
p { margin: 0; }
.w { stroke: #f2f2f2; }
.b { stroke: #1e8bcd; }
.lb { stroke: #7db8ea; }

.titlebar { height: 23px; flex: none; background: #202020; display: flex; align-items: center; padding-left: 3px; color: #8a8a8a; }
.appicon { width: 14px; height: 16px; }
.wtitle { margin-left: 8px; width: 310px; white-space: nowrap; letter-spacing: -0.26px; }
.wbtns { margin-left: auto; display: flex; gap: 34px; padding-right: 19px; margin-top: -3px; }
.wbtns svg { width: 12px; height: 12px; stroke: #999; }
.menu { height: 24px; flex: none; display: flex; align-items: center; gap: 17px; padding-left: 8px; letter-spacing: -0.45px; }

.tb { display: flex; align-items: center; flex: none; --aw: 11.5px; stroke: #ccc; }
.tb > i { width: 33px; height: 35px; display: flex; align-items: center; justify-content: center; flex: none; }
.tb svg { width: 24px; height: 24px; stroke: #ccc; flex: none; }
.tb svg text, .side svg text { stroke: none; letter-spacing: 0; }
.tb > u { width: var(--aw); flex: none; height: 5px; margin-top: 2px; position: relative; }
.tb > u::before { content: ""; display: block; width: 8px; height: 5px; margin-left: 2px; background: #e8e8e8; clip-path: polygon(0 0, 100% 0, 50% 100%); }
.tb > b { width: 7px; height: 18px; flex: none; background: linear-gradient(#444, #444) 2px 0 / 1px 100% no-repeat; }
.tb .m1 { margin-left: 1.300px; }
.tb .n2 { margin-left: -2px; }
.tb .n1 { margin-left: -1px; }
.tb .on, .side .on { background: #2a2a2a; border: 1px solid #777; }
.tb1 { height: 37px; padding-left: 2.500px; margin-top: 0; }
.tb2 { height: 40px; padding-left: 4px; }
.cb { height: 24px; border: 1px solid #4a4a4a; display: flex; justify-content: space-between; flex: none; color: #888; align-items: center; }
.cb em { padding-left: 3px; }
.cb s { width: 17px; height: 22px; background: #2e2e2e; border-left: 1px solid #4a4a4a; display: grid; place-items: center; }
.cb s::before, .sel s::before { content: ""; width: 6px; height: 6px; border: solid #777; border-width: 0 1px 1px 0; transform: translateY(-1px) rotate(45deg); }
.cb1 { width: 167px; }
.cb2 { width: 184px; }
.cb3 { width: 59px; margin-left: 8.500px; }
.x1 { margin-left: 1.500px; }
.tb2 > b { background-position: 3px 0; }
.x2 { margin-left: -2px; }
.x3 { margin-left: 7px; }
.tx { font-size: 19px; color: #ddd; position: relative; letter-spacing: 0; }
.bold { font-weight: 800; }
.ital { font-style: italic; }
.und { text-decoration: underline; text-underline-offset: 3px; }
.strike { text-decoration: line-through; }
.sm { font-size: 17px; }
.sm sup, .sm sub { font-size: 10px; line-height: 8px; align-self: flex-start; margin-top: 10px; }
.sm sub { align-self: flex-end; margin: 0 0 8px; }
.tx q { position: absolute; left: 5px; bottom: 6px; width: 24px; height: 6px; background: #b0b0b0; quotes: none; }

.work { flex: none; height: 847px; display: flex; }
.side { width: 48px; display: flex; flex-direction: column; padding-top: 3.500px; flex: none; }
.side i { width: 33px; height: 35px; margin-left: 7px; flex: none; display: grid; place-items: center; }
.side svg { width: 24px; height: 24px; stroke: #ddd; }
.side .num { font: 19px/24px "Open Sans", sans-serif; letter-spacing: -1.200px; }
.side .aa { font-style: italic; font-weight: 600; letter-spacing: 0; }
.side .more { margin-top: 13px; }
.doc { flex: none; width: 1872px; display: grid; grid-template-columns: 26px 1846px; grid-template-rows: 26px 820px; height: 847px; background: #fff; }
.hruler { grid-column: 1 / 3; }
.doc { height: 846px; }
.doc svg text { font-size: 10px; fill: #fff; stroke: none; letter-spacing: -0.3px; }
.canvas { background: #00669a; position: relative; overflow: hidden; box-shadow: inset 0 -1px #5590ae, inset -1px 0 #5590ae; }
.grid { position: absolute; left: 0; top: 0; }
.lbl { position: absolute; left: 1px; top: 18px; color: #06283b; font: 10px/16px "Liberation Mono", monospace; letter-spacing: -0.7px; }
.table { position: absolute; left: 38px; top: 57px; width: 823px; height: 442px; border: 1px solid #fff; background: #1a1a1a; display: flex; flex-direction: column; }
.thead { height: 20px; display: flex; border-bottom: 1px solid #fff; flex: none; line-height: 20px; text-align: center; }
.thead span { border-right: 1px solid #fff; height: 18px; }
.thead .rowh { width: 24px; border-right: 1px solid #000; height: 20px; border-bottom: 1px solid #000; }
.c1 { width: 82px; } .c2 { width: 86px; } .c3 { width: 95px; } .c4 { width: 102px; }
.tbody { display: flex; height: 403px; flex: none; border-bottom: 1px solid #000; }
.rows { width: 24px; border-right: 1px solid #000; }
.cells { flex: 1; background: #ddd; }
.vs { width: 16px; padding: 17px 0 0 8px; }
.vs p { width: 2px; height: 300px; background: #999; }
.nav { flex: 1; display: flex; align-items: center; background: #ddd; color: #888; font: 12px/16px "Noto Sans", sans-serif; }
.rec { width: 40px; white-space: nowrap; letter-spacing: -0.6px; }
.nav .box { width: 43px; height: 17px; background: #1a1a1a; margin: 0 3px 0 0; border-right: 1px solid #777; }
.nav .of { width: 59px; letter-spacing: 0; }
.nav svg { width: 80px; height: 16px; margin-top: -1px; }
.hs { flex: 1; height: 17px; background: #151515; padding: 7px 0 0 16px; }
.hs p { height: 2px; background: #999; }

.tb3 { height: 38px; padding-left: 4.500px; --aw: 11px; }
.x5 { margin-left: 3px; }

.status { height: 23px; flex: none; border-top: 1px solid #fff; border-bottom: 1px solid #4a4a4a; display: flex; align-items: center; position: relative; }
.status > span { height: 17px; border-right: 1px solid #444; display: flex; align-items: center; flex: none; padding-bottom: 0; white-space: nowrap; }
.s1 { width: 387px; padding-left: 11px; } .s2 { width: 347px; padding-left: 10px; } .s3 { width: 345px; }
.s4 { width: 69px; padding-left: 79px; } .s5 { width: 46px; padding-left: 9px; } .s6 { width: 30px; }
.status .s4 { padding-left: 12px; width: 115px; margin-right: 0; }
.status .s4 { width: 115px; padding-left: 79px; }
.status .s4 { width: 69px; padding-left: 0; justify-content: flex-start; }
.status .s3 { width: 414px; border-right: 0; background: linear-gradient(#444, #444) 345px 0 / 1px 100% no-repeat; }
.status .s4 { width: 46px; padding-left: 10px; }
.status .s6 { width: 30px; }
.status .s7 { width: 272px; padding-left: 39px; border-right: 0; background: linear-gradient(#444, #444) 30px 0 / 1px 100% no-repeat; }
.status .s8 { width: 231px; }
.s7 em, .s8 em { padding: 4px 0 0 4px; }
.s9 { width: 144px; padding-left: 9px; } .status .s10 { border: 0; padding-left: 9px; }
.status svg { flex: none; }

.taskbar { height: 47px; background: #222020; display: flex; flex: none; position: relative; letter-spacing: 0; }
.weather { width: 638px; padding-left: 17px; display: flex; padding-top: 4px; flex: none; }
.weather div { display: flex; flex-direction: column; padding: 3px 0 0 -2px; }
.weather span { letter-spacing: -0.3px; margin-left: -2px; } .weather em { color: #b5b5b5; letter-spacing: -0.3px; margin-left: -2px; }
.apps { display: flex; align-items: center; gap: 20px; flex: none; padding-bottom: 1px; }
.search { width: 220px; height: 33px; border-radius: 17px; background: #413f3f; border: 1px solid #555; margin-left: -7px; margin-right: -8px; display: flex; align-items: center; padding-left: 10px; color: #ccc; font-size: 13px; }
.search span { margin-left: 8px; flex: 1; letter-spacing: -0.2px; }
.search .hall { margin-right: 3px; }
.cur { width: 36px; height: 40px; margin-left: -6px; border-radius: 5px; background: #2d2b2b; border: 1px solid #383636; display: grid; place-items: center; position: relative; box-shadow: 4px 0 0 -1px #2a2828; }
.cur::after { content: ""; position: absolute; bottom: 0; left: 10px; width: 16px; height: 3px; border-radius: 2px; background: #f0805c; }
.apps > svg:nth-child(8), .apps > svg:nth-child(10) { filter: drop-shadow(0 0 0 #222); }
.taskbar::before, .taskbar::after { content: ""; position: absolute; left: 1136px; top: 40px; width: 6px; height: 3px; border-radius: 2px; background: #999; }
.taskbar::after { left: 1224px; }
.tray { margin-left: auto; display: flex; align-items: center; padding-right: 21px; padding-bottom: 1px; }
.t-mic { margin-left: 19px; } .lang { margin-left: 21px; width: 22px; letter-spacing: -0.8px; white-space: nowrap; }
.t-wifi { margin-left: 19px; } .t-vol { margin-left: 8px; }
.clock { display: flex; flex-direction: column; text-align: right; width: 72px; margin-left: 2px; letter-spacing: -0.3px; }
.t-bell { margin-left: 8px; }

.watermark { position: absolute; left: 1392px; top: 938px; color: rgba(165, 165, 165, .62); white-space: nowrap; letter-spacing: 0; }
.watermark p { font-size: 18px; line-height: 26px; }
.watermark span { font-size: 14.500px; line-height: 18px; letter-spacing: -0.1px; }

.dialog { position: absolute; left: 546px; top: 332px; width: 528px; height: 376px; border-radius: 8px; background: #191919; box-shadow: 0 0 0 1px #3a3a3a, 0 10px 34px 6px rgba(0, 0, 0, .55); overflow: visible; display: flex; flex-direction: column; padding: 0 9px 0 8px; }
.dtitle { height: 30px; margin: 0 -9px 0 -8px; padding: 0 9px; background: #202020; border-radius: 8px 8px 0 0; display: flex; align-items: center; justify-content: space-between; }
.tabs { display: flex; align-items: flex-end; height: 32px; flex: none; position: relative; z-index: 1; margin-bottom: -1px; }
.tab { height: 22px; width: 69px; border: 1px solid #888; background: #333; display: grid; place-items: center; margin-bottom: 0; margin-left: -1px; }
.tab.act { height: 24px; width: 62px; background: #191919; border-bottom: 0; margin-left: 0; }
.panel { flex: none; height: 297px; border: 1px solid #888; padding: 8px 0 0 8px; position: relative; }
.row { display: flex; height: 22px; margin-bottom: 14px; }
.row label { width: 187px; display: flex; align-items: center; white-space: nowrap; overflow: hidden; flex: none; letter-spacing: -0.3px; }
.row label i { letter-spacing: -0.59px; }
.fld { width: 290px; border: 1px solid #999; display: flex; align-items: center; padding-left: 2px; justify-content: space-between; }
.spin { width: 15px; height: 18px; margin-right: 1px; border: 1px solid #777; background: linear-gradient(#777, #777) 0 50% / 100% 2px no-repeat, #2e2e2e; border-radius: 2px; position: relative; }
.spin::before, .spin::after { content: ""; position: absolute; left: 4px; top: 2px; border: solid transparent; border-width: 0 2.500px 3px; border-bottom-color: #fff; }
.spin::after { top: 11px; border-width: 3px 2.500px 0; border-top-color: #fff; }
.dis { color: #777; }
.dis .fld { border-color: #444; }
.dis .spin { border-color: #484848; background: linear-gradient(#484848, #484848) 0 50% / 100% 2px no-repeat, #2a2a2a; }
.dis .spin::before { border-bottom-color: #777; } .dis .spin::after { border-top-color: #777; }
.font { height: 30px; margin-bottom: 6px; }
.font .fld { width: 250px; border-color: #ddd; }
.btn { width: 32px; height: 28px; margin: 1px 0 0 7px; border: 1px solid #999; border-radius: 4px; background: #333; display: grid; place-items: center; }
.sel { height: 23px; margin-bottom: 13px; }
.r7 { margin-bottom: 14px; }
.sel .fld { padding-left: 2px; }
.sel s { width: 17px; height: 21px; background: #333; border: 1px solid #999; display: grid; place-items: center; }
.sel s::before { border-color: #bbb; }
.col { height: 28px; }
.col .btn { margin-top: 0; margin-left: 8px; }
.cbtn { width: 248px; margin-left: 1px; border-radius: 4px; background: #333; justify-content: flex-start; }
.sw { width: 30px; height: 14px; border: 1px solid #999; background: #1a1a1a; margin-right: 4px; }
.cbtn u { margin-left: auto; margin-right: 7px; width: 10px; height: 5px; background: #fff; clip-path: polygon(0 0, 100% 0, 50% 100%); }
.dscroll { position: absolute; right: 9px; top: 95px; width: 2px; height: 103px; background: #999; }
.marks { position: absolute; left: 550px; top: 530px; }
```
FILE: script.js
```js
// Rulers, snap grid and selection handles of the form designer.
const CM = 37.795;
const rect = (x, y, w, h, fill) => `<rect x="${x}" y="${y}" width="${w}" height="${h}" fill="${fill}"/>`;

function hRuler() {
  let s = rect(27, 4, 453, 17, '#1a1a1a') + rect(481, 5, 1391, 15, '#1a1a1a') + rect(1870, 5, 1, 15, '#fff');
  for (let n = 1; n <= 49; n++) {
    const half = Math.round(26 + (n - 0.5) * CM);
    s += rect(half, 9, 1, 5, '#fff');
    if (n === 49) break;
    const x = Math.round(26 + n * CM);
    s += rect(x, 4, 1, 2, '#fff') + rect(x, 19, 1, 2, '#fff');
    s += `<text x="${x + 0.5}" y="15.500" text-anchor="middle">${n}</text>`;
  }
  document.getElementById('hr').innerHTML = s;
}

function vRuler() {
  let s = rect(4, 1, 17, 50, '#1a1a1a') + rect(5, 52, 15, 767, '#1a1a1a');
  for (let n = 1; n <= 22; n++) {
    const half = Math.round((n - 0.5) * CM);
    s += rect(9, half, 5, 1, '#fff');
    if (n === 22) break;
    const y = Math.round(n * CM);
    s += rect(4, y, 2, 1, '#fff') + rect(19, y, 2, 1, '#fff');
    s += `<text transform="translate(15.500 ${y + 0.5}) rotate(-90)" text-anchor="middle">${n}</text>`;
  }
  document.getElementById('vr').innerHTML = s;
}

function grid() {
  let d = '';
  const dot = (x, y) => { d += `M${Math.round(x)} ${Math.round(y)}h1v1h-1z`; };
  for (let i = 0; i <= 48; i++)
    for (let k = 0; k * CM / 6 < 820; k++) dot(i * CM, k * CM / 6);
  for (let j = 0; j <= 21; j++)
    for (let k = 0; k * CM / 6 < 1846; k++) if (k % 6) dot(k * CM / 6, j * CM);
  const c = '#6d8592';
  document.getElementById('grid').innerHTML = `<path fill="#b9c6ce" d="${d}"/>` +
    rect(0, 0, 8, 8, c) + rect(1837, 0, 8, 8, c) + rect(0, 813, 8, 7, c) + rect(1837, 813, 8, 7, c);
}

function handles() {
  let s = '';
  for (const x of [-4, 223, 450])
    for (const y of [-4, 22, 47])
      if (x !== 223 || y !== 22)
        s += `<rect x="${x + 0.5}" y="${y + 0.5}" width="8" height="8" fill="#264d62" stroke="#fff"/>`;
  document.getElementById('handles').innerHTML = s;
}

hRuler();
vRuler();
grid();
handles();
```
